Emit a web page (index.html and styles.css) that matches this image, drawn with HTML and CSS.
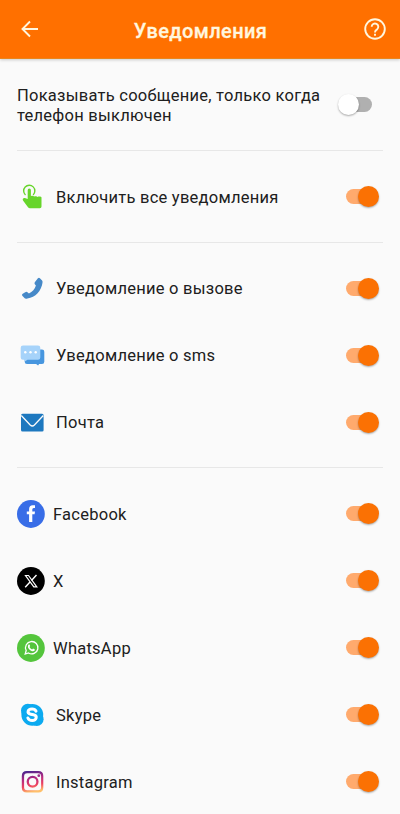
FILE: index.html
```html
<!DOCTYPE html>
<html lang="ru">
<head>
<meta charset="utf-8">
<title>Уведомления</title>
<link rel="stylesheet" href="styles.css">
</head>
<body>
<header class="bar">
  <svg class="back" width="18" height="18" viewBox="0 0 18 18"><path d="M17 9H2M9 1.500 1.500 9 9 16.500"/></svg>
  <h1>Уведомления</h1>
  <svg class="help" width="22" height="22" viewBox="0 0 22 22"><circle cx="11" cy="11" r="9.800"/><path d="M7.700 8.800a3.300 3.300 0 1 1 5.300 2.600c-1.100.9-2 1.300-2 3"/><path d="M11 15.800v2"/></svg>
</header>
<main>
  <div class="row intro"><p>Показывать сообщение, только когда телефон выключен</p><span class="switch off"></span></div>
  <section>
    <div class="row">
      <svg class="icon" width="32" height="32" viewBox="0 0 32 32"><path fill="#67d52b" d="M11.700 9.200a1.600 1.600 0 0 1 3.200 0v6.100c.8-.8 2.700-.6 3.200.3.900-.7 2.900-.5 3.400.4 1-.7 3.900-.6 4 .6v8.900q0 1.700-1.700 1.700H14q-1.200 0-2-1l-5-6.800c-.8-1.300.3-2.700 1.900-2.300l2.800 1z"/><path d="M9.500 14a5.600 5.600 0 1 1 7.600-.1" fill="none" stroke="#67d52b" stroke-width="1.400"/></svg>
      <p>Включить все уведомления</p><span class="switch"></span>
    </div>
  </section>
  <section class="system">
    <div class="row">
      <svg class="icon" width="32" height="32" viewBox="0 0 32 32"><path fill="#4689c8" d="M21.900 5.300q1-.9 2-.1l2.200 2.300q.7 1 .4 2.300C25.500 17.500 19.500 24.800 11.400 25.400q-1.700.7-2.700-.1l-2.400-2.600q-.9-1.200.4-2l3-1.700q1-.4 1.800.3l1.400 1.100c3.500-1.400 6-4.300 7-7.800l-1.100-1.400q-.6-.9 0-1.900z"/></svg>
      <p>Уведомление о вызове</p><span class="switch"></span>
    </div>
    <div class="row">
      <svg class="icon" width="32" height="32" viewBox="0 0 32 32"><path fill="#4796df" d="M11 9.500h15q2.300 0 2.300 2.300v9.900q0 2.300-2.300 2.300h-2.900l-1 1.500-2-1.500H11q-2.300 0-2.300-2.300v-9.900Q8.700 9.500 11 9.500z"/><path fill="#a6d3fa" d="M7 5.500h15q2.300 0 2.300 2.300v9.700q0 2.300-2.300 2.300H11.500l-2.300 1.500L8 19.800H7q-2.300 0-2.300-2.300V7.800Q4.700 5.500 7 5.500z"/><g fill="#fff"><circle cx="9.300" cy="12.300" r="1.200"/><circle cx="14.500" cy="12.300" r="1.200"/><circle cx="19.700" cy="12.300" r="1.200"/></g></svg>
      <p>Уведомление о sms</p><span class="switch"></span>
    </div>
    <div class="row">
      <svg class="icon" width="32" height="32" viewBox="0 0 32 32"><rect x="5" y="6.800" width="22.600" height="17.600" rx="1.500" fill="#1d78bf"/><path d="m5.300 8.500 8.900 9.500q2.100 2 4.200 0l8.900-9.500" fill="none" stroke="#fafafa" stroke-width="1.300"/></svg>
      <p>Почта</p><span class="switch"></span>
    </div>
  </section>
  <section>
    <div class="row wide">
      <svg class="icon" width="32" height="32" viewBox="0 0 32 32"><circle cx="14.900" cy="16" r="13.900" fill="#386de7"/><path fill="#fff" d="M13.100 24v-7.700h-2.300v-2.900h2.300v-2.300q0-3.800 3.700-3.800h2.200V10h-1.300q-1.400 0-1.400 1.500v1.900H19l-.4 2.900h-2.300V24z"/></svg>
      <p>Facebook</p><span class="switch"></span>
    </div>
    <div class="row wide">
      <svg class="icon" width="32" height="32" viewBox="0 0 32 32"><circle cx="14.900" cy="16" r="13.900" fill="#000"/><g fill="none" stroke="#fff"><path stroke-width="1.200" d="M9.500 10.500h3l8.300 11.400h-3z"/><path stroke-width="1.400" d="m20.500 10-5 5.500M14 17l-4.800 5.300"/></g></svg>
      <p>X</p><span class="switch"></span>
    </div>
    <div class="row wide">
      <svg class="icon" width="32" height="32" viewBox="0 0 32 32"><circle cx="14.900" cy="16" r="13.900" fill="#54c53c"/><path d="m9.200 22 1-3.500a6.200 6.200 0 1 1 2.300 2.500z" fill="none" stroke="#fff" stroke-width="1.300"/><path fill="#fff" d="m13.300 12.300.9 1.700-.7 1q.8 1.700 2.600 2.400l1-.9 1.800.9q.1 1.700-1.800 1.800c-2.700 0-5.300-2.700-5.200-5q.2-1.700 1.400-1.900z"/></svg>
      <p>WhatsApp</p><span class="switch"></span>
    </div>
    <div class="row">
      <svg class="icon" width="32" height="32" viewBox="0 0 32 32"><g fill="#0caaf0"><circle cx="16.300" cy="15.800" r="10.900"/><circle cx="11.800" cy="11.500" r="6.800"/><circle cx="20.800" cy="20.200" r="6.800"/></g><path d="M20 12.200q-1-2.300-3.900-2.300c-4.800 0-5.400 4.400-1.300 5.300l2.700.6c4.300 1 3.200 5.700-1.300 5.700q-3.300 0-4.300-2.500" fill="none" stroke="#fff" stroke-width="3" stroke-linecap="round"/></svg>
      <p>Skype</p><span class="switch"></span>
    </div>
    <div class="row">
      <svg class="icon" width="32" height="32" viewBox="0 0 32 32"><defs><linearGradient id="ig" x1=".15" y1="0" x2=".35" y2="1"><stop offset="0" stop-color="#42258f"/><stop offset=".4" stop-color="#b32a81"/><stop offset=".72" stop-color="#ef4260"/><stop offset="1" stop-color="#ffc06a"/></linearGradient></defs><g transform="translate(.8 -.2)"><path fill="url(#ig)" fill-rule="evenodd" d="M10 5.200h11.500q5 0 5 5v11.500q0 5-5 5H10q-5 0-5-5V10.200q0-5 5-5zm.3 2.200q-3 0-3 3v11.100q0 3 3 3h11q3 0 3-3V10.400q0-3-3-3zM15.800 10a6 6 0 1 1 0 12 6 6 0 0 1 0-12zm0 2.300a3.700 3.700 0 1 0 0 7.400 3.700 3.700 0 0 0 0-7.400z"/><circle cx="22" cy="9.900" r="1.400" fill="#9c2e8c"/></g></svg>
      <p>Instagram</p><span class="switch"></span>
    </div>
  </section>
</main>
</body>
</html>
```
FILE: styles.css
```css
* { box-sizing: border-box; }
body {
  margin: 0;
  height: 814px;
  overflow: hidden;
  background: #fafafa;
  color: #202020;
  font-family: Roboto, sans-serif;
  font-size: 16.5px;
  letter-spacing: .25px;
}
.bar {
  display: flex;
  align-items: center;
  justify-content: space-between;
  height: 59px;
  padding: 0 14px 0 21px;
  background: #ff7000;
  color: #fff6df;
  border-bottom: 1px solid #e9851c;
  box-shadow: 0 1px 3px #0003;
}
.bar svg { fill: none; stroke: #fff6df; stroke-width: 1.9; }
.bar h1 {
  margin: 3px 2px 0 0;
  font-size: 20px;
  font-weight: 500;
  letter-spacing: .4px;
  -webkit-text-stroke: .3px #fff6df;
}
p { margin: 0; flex: 1; white-space: nowrap; }
main { padding: 0 17px; }
.row { display: flex; align-items: center; height: 67px; }
.row p { padding-top: 1px; }
.system p { padding: 0 0 1px; }
.icon { flex: none; margin: 0 8px 0 -1px; }
.wide .icon { margin-right: 5px; }
.intro { height: 91px; }
.intro p { line-height: 20px; white-space: normal; padding-top: 2px; }
section { border-top: 1px solid #e7e7e7; padding: 12px 0; }
section:last-child { margin-top: -1px; }
.switch {
  flex: none;
  display: flex;
  align-items: center;
  justify-content: flex-end;
  width: 26px;
  height: 15px;
  margin-right: 11px;
  border-radius: 8px;
  background: #ffaa6d;
}
.switch::after {
  content: "";
  flex: none;
  width: 21px;
  height: 21px;
  margin-right: -7px;
  border-radius: 50%;
  background: #fb7103;
  box-shadow: 0 1px 2px #0005;
}
.switch.off { justify-content: flex-start; background: #b0b0b0; }
.switch.off::after { margin: 0 0 0 -8px; background: #fff; }
```
